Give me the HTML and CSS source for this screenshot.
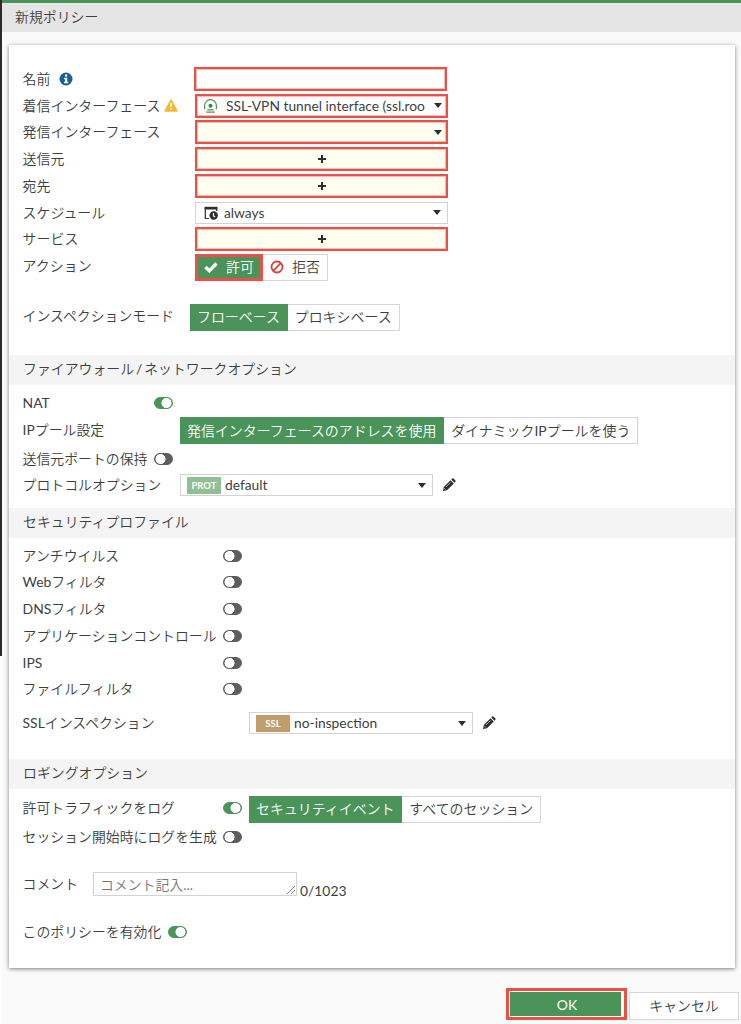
FILE: index.html
```html
<!DOCTYPE html>
<html lang="ja">
<head>
<meta charset="utf-8">
<title>新規ポリシー</title>
<link rel="stylesheet" href="styles.css">
</head>
<body>
<svg class="defs" width="0" height="0">
  <symbol id="pencil" viewBox="0 0 14 14"><path d="M1 13l.8-4L8.600 2.200l3.200 3.200L5 12.200z"/><path d="M9.300 1.500l.9-.9q.7-.5 1.300 0l1.900 1.900q.5.600 0 1.300l-.9.900z"/><path d="M4 9l4.500-4.500M2.300 10.200l1.500 1.500" stroke="#fff" stroke-width=".6"/></symbol>
</svg>
<div class="side"></div>
<main class="page">
  <header class="title">新規ポリシー</header>
  <form class="panel">
    <section class="basic">
      <div class="row"><label>名前<svg class="info" viewBox="0 0 14 14"><circle cx="7" cy="7" r="6.500" fill="#18609b"/><path d="M6 2.500h2.200v2H6zM5 5.700h3.200v4.100h1v1.500H5V9.800h1V7.200H5z" fill="#fff"/></svg></label><div class="field marked name"></div></div>
      <div class="row"><label>着信インターフェース<svg class="warn" viewBox="0 0 14 13"><path d="M7 1.200L13 12H1z" fill="#f5b82e" stroke="#f5b82e" stroke-width="1.500" stroke-linejoin="round"/><path d="M6.100 4h1.800l-.3 4H6.400zM6.200 9.200h1.600v1.600H6.200z" fill="#fff"/></svg></label><div class="field marked"><svg class="tunnel" viewBox="0 0 14 14"><path d="M1.500 10.500V7a5.500 5.500 0 0 1 11 0v3.500" fill="none" stroke="#4a9459" stroke-width="1.100"/><path d="M4 11h6M3 13.200h8" stroke="#4a9459" stroke-width="1.100"/><circle cx="7" cy="7.200" r="1.900" fill="#378848"/></svg><span>SSL-VPN tunnel interface (ssl.roo</span><i class="caret"></i></div></div>
      <div class="row"><label>発信インターフェース</label><div class="field marked empty"><i class="caret"></i></div></div>
      <div class="row"><label>送信元</label><div class="field marked empty"><i class="plus"></i></div></div>
      <div class="row"><label>宛先</label><div class="field marked empty"><i class="plus"></i></div></div>
      <div class="row"><label>スケジュール</label><div class="field plain"><svg class="sched" viewBox="0 0 14 14"><path d="M5 12.500H1.300V1.500h11.400V5" fill="none" stroke="#2b2f33" stroke-width="1.200"/><path d="M.7.800h12.600v2.700H.700z" fill="#2b2f33"/><circle cx="9.700" cy="9.500" r="4.200" fill="#2b2f33"/><path d="M9.500 7v3l1.600 1.100" fill="none" stroke="#fff" stroke-width="1.200"/></svg><span>always</span><i class="caret"></i></div></div>
      <div class="row"><label>サービス</label><div class="field marked empty"><i class="plus"></i></div></div>
      <div class="row action"><label>アクション</label><div class="choice"><span class="on accept"><svg viewBox="0 0 14 12"><path d="M1.500 6L5.300 9.800L12.500 2.500" fill="none" stroke="#fff" stroke-width="3.300"/></svg>許可</span><span class="deny"><svg viewBox="0 0 14 14"><circle cx="7" cy="7" r="5.500" fill="none" stroke="#d8403c" stroke-width="1.800"/><path d="M3.200 10.800l7.600-7.600" stroke="#d8403c" stroke-width="1.800"/></svg>拒否</span></div></div>
    </section>
    <div class="row inspect"><label>インスペクションモード</label><div class="choice"><span class="on">フローベース</span><span>プロキシベース</span></div></div>

    <h2>ファイアウォール / ネットワークオプション</h2>
    <section class="network">
      <div class="row nat"><label>NAT</label><i class="toggle on"></i></div>
      <div class="row pool"><label>IPプール設定</label><div class="choice"><span class="on">発信インターフェースのアドレスを使用</span><span>ダイナミックIPプールを使う</span></div></div>
      <div class="row keep"><label>送信元ポートの保持</label><i class="toggle"></i></div>
      <div class="row"><label>プロトコルオプション</label><div class="field plain"><b class="tag">PROT</b><span>default</span><i class="caret"></i></div><svg class="edit"><use href="#pencil"/></svg></div>
    </section>

    <h2>セキュリティプロファイル</h2>
    <section class="security">
      <div class="row"><label>アンチウイルス</label><i class="toggle"></i></div>
      <div class="row"><label>Webフィルタ</label><i class="toggle"></i></div>
      <div class="row"><label>DNSフィルタ</label><i class="toggle"></i></div>
      <div class="row"><label>アプリケーションコントロール</label><i class="toggle"></i></div>
      <div class="row"><label>IPS</label><i class="toggle"></i></div>
      <div class="row"><label>ファイルフィルタ</label><i class="toggle"></i></div>
      <div class="row ssl"><label>SSLインスペクション</label><div class="field plain"><b class="tag brown">SSL</b><span>no-inspection</span><i class="caret"></i></div><svg class="edit"><use href="#pencil"/></svg></div>
    </section>

    <h2>ロギングオプション</h2>
    <section class="logging">
      <div class="row log"><label>許可トラフィックをログ</label><i class="toggle on"></i><div class="choice"><span class="on">セキュリティイベント</span><span>すべてのセッション</span></div></div>
      <div class="row"><label>セッション開始時にログを生成</label><i class="toggle"></i></div>
    </section>
    <div class="row comment"><label>コメント</label><div class="textarea">コメント記入...<svg viewBox="0 0 8 8"><path d="M0 8L8 0M4 8l4-4" stroke="#777" stroke-width=".9"/></svg></div><span class="count">0/1023</span></div>
    <div class="row enable"><label>このポリシーを有効化</label><i class="toggle on"></i></div>
  </form>
  <footer><div class="ok"><span>OK</span></div><div class="cancel">キャンセル</div></footer>
</main>
</body>
</html>
```
FILE: styles.css
```css
* { box-sizing: border-box; }
body {
  margin: 0; height: 1024px; overflow: hidden; display: flex;
  background: #fff; color: #3c3f42;
  font: 400 13.88px/20px Lato, "Noto Sans CJK JP DemiLight", "Noto Sans CJK JP", sans-serif;
}
.defs { position: absolute; }
.side { width: 2px; height: 656px; background: #2b2b2d; flex: none; }
.page { flex: 1; background: #fafafa; border-top: 3px solid #4a9459; }
.title { height: 29px; padding-left: 13px; line-height: 28px; background: #e5e5e5; }
.panel { margin: 13px 6px 0 7px; height: 923px; background: #fff; padding-top: 20.5px; box-shadow: 0 1px 4px rgba(0,0,0,.5); }
.row { display: flex; align-items: center; height: 26.75px; padding-left: 13.6px; white-space: nowrap; }
label { flex: none; display: flex; align-items: center; }
h2 { margin: 0; height: 30px; padding-left: 14px; background: #f4f4f4; font-size: inherit; font-weight: 400; line-height: 28px; word-spacing: -1.6px; }

.basic label { width: 172.4px; font-size: 13.95px; }
.info { width: 14px; height: 14px; margin-left: 9px; }
.warn { width: 14px; height: 13px; margin-left: 4px; }
.field { display: flex; align-items: center; width: 253px; height: 22px; padding: 0 6px; background: #fff; }
.field span { font-size: 13.8px; }
.plain { border: 1px solid #d3d3d3; }
.marked { height: 24px; padding: 0 4px 0 6px; border: 2.5px solid #ea4f48; box-shadow: inset 0 0 0 1px #f5bcb6; }
.name { margin-left: -1px; }
.empty { background: #ffffef; }
.caret { margin-left: auto; border: 4.5px solid transparent; border-top: 5px solid #2b2f33; border-bottom: 0; }
.plus { width: 8px; height: 8px; margin: 0 auto; background: linear-gradient(#2b2f33, #2b2f33) center / 8px 2px no-repeat, linear-gradient(#2b2f33, #2b2f33) center / 2px 8px no-repeat; }
.tunnel { width: 15px; height: 15px; margin-right: 8px; flex: none; }
.sched { width: 14px; height: 14px; margin: 0 6px 0 2px; flex: none; }

.choice { display: flex; height: 27px; font-size: 13.95px; }
.choice span { display: flex; align-items: center; padding: 0 7px; border: 1px solid #d6d6d6; border-left: 0; background: #fff; }
.choice .on { background: #4a9459; color: #fff; border: 0; padding-right: 7.8px; }
.action .choice { margin-top: 2px; }
.choice .accept { width: 68px; padding: 0 6px; border: 3px solid #ea4f48; }
.accept svg { width: 14px; height: 12px; margin-right: 8px; }
.deny svg { width: 14px; height: 14px; margin-right: 8px; }
.inspect { margin: 24.5px 0 24px; }
.inspect label { width: 167.4px; }
.inspect label, .pool label, .log label { margin-top: -2px; }

.network { height: 123px; padding-top: 4.5px; }
.network label { width: 157.4px; }
.network .row label:has(+ .toggle) { width: 131.4px; }
.nat { margin-bottom: 1.5px; }
.keep { margin-top: 1px; }
.toggle { width: 19px; height: 12px; border: 1px solid #5d5d5d; border-radius: 6px; background: radial-gradient(circle at 5.500px 5px, #fff 4.800px, #5d5d5d 5.300px); flex: none; }
.toggle.on { border-color: #4a9459; background: radial-gradient(circle at 11.500px 5px, #fff 4.800px, #4a9459 5.300px); }
.tag { width: 34px; height: 17px; margin-right: 4px; font-size: 9.500px; line-height: 17px; text-align: center; color: #fff; background: #8fbf93; }
.brown { background: #bf9e6c; }
.edit { width: 14px; height: 14px; margin-left: 9px; fill: #2b2f33; }

.security { height: 221px; padding-top: 4.600px; }
.security label { width: 200.400px; }
.ssl { margin-top: 7px; }
.ssl .field { width: 224px; }
.security .ssl label { width: 226.400px; }
.logging { padding-top: 7px; }
.logging label { width: 200.400px; }
.logging .choice { margin-left: 7px; }
.log .toggle { margin-top: -2px; }
.logging .row + .row { margin-top: 1.500px; }
.comment { margin-top: 20px; }
.comment label { width: 70.400px; }
.textarea { position: relative; width: 204px; height: 24px; padding-left: 6px; border: 1px solid #d3d3d3; line-height: 23px; color: #777; }
.textarea svg { position: absolute; right: 1px; bottom: 1px; width: 8px; height: 8px; }
.count { margin: 14px 0 0 3px; }
.enable { margin-top: 21px; }
.enable label { width: 145.400px; }

footer { display: flex; justify-content: flex-end; padding: 20px 2px 0 0; }
.ok { width: 121px; height: 32px; padding: 1px 3px 1px 1px; border: 3px solid #ea4f48; background: #fafafa; }
.ok span { display: block; height: 24px; padding-left: 3px; line-height: 25px; text-align: center; color: #fff; background: #4a9459; }
.cancel { width: 110px; height: 28px; margin: 4px 0 0 2px; border: 1px solid #d6d6d6; background: #fff; line-height: 25px; text-align: center; }
```
